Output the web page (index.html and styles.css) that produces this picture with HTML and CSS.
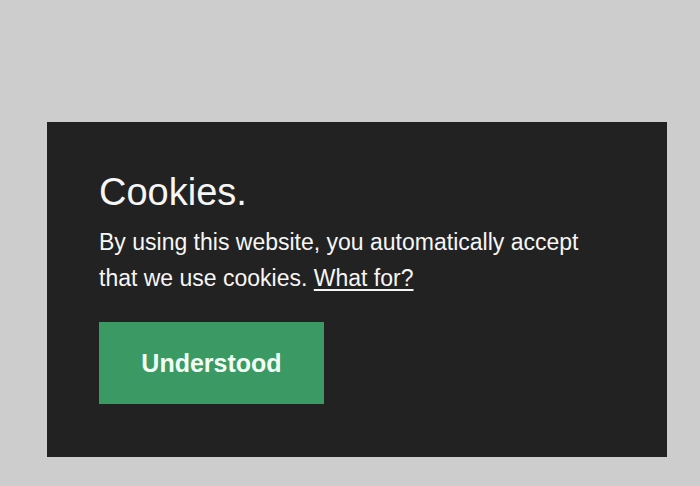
FILE: index.html
```html
<!DOCTYPE html>
<html lang="en">
<head>
<meta charset="utf-8">
<title>Cookies</title>
<link rel="stylesheet" href="styles.css">
</head>
<body>
<div class="cookie-card">
  <h1 class="cookie-title">Cookies.</h1>
  <p class="cookie-text">By using this website, you automatically accept that we use cookies. <a class="cookie-link" href="#">What for?</a></p>
  <button class="cookie-btn" type="button">Understood</button>
</div>
</body>
</html>
```

FILE: styles.css
```css
html, body {
  margin: 0;
  padding: 0;
}
body {
  background: #cdcdcd;
  font-family: "Liberation Sans", Arial, sans-serif;
  padding-top: 122px;
  padding-left: 47px;
}
.cookie-card {
  box-sizing: border-box;
  width: 620px;
  height: 335px;
  background: #222222;
  padding: 48px 0 0 52px;
  color: #f6f6f6;
}
.cookie-title {
  margin: 0;
  font-size: 38px;
  line-height: 44px;
  font-weight: normal;
}
.cookie-text {
  margin: 10px 0 0;
  font-size: 23px;
  line-height: 36px;
  max-width: 500px;
}
.cookie-link {
  color: #f6f6f6;
  text-decoration: underline;
  text-underline-offset: 3px;
}
.cookie-btn {
  margin-top: 26px;
  width: 225px;
  height: 82px;
  border: none;
  background: #3b9a64;
  color: #f2fff4;
  font-family: "Liberation Sans", Arial, sans-serif;
  font-weight: bold;
  font-size: 25px;
  padding: 0;
  display: block;
}
```
